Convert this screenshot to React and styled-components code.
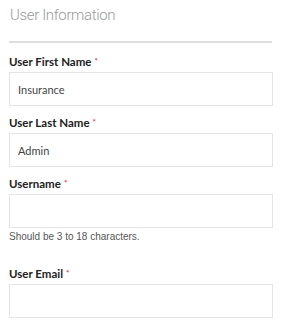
import React from 'react'
import styled, { createGlobalStyle } from 'styled-components'

const GlobalStyle = createGlobalStyle`
  body {
    margin: 0;
    background: #fff;
  }
`

const fields = [
  { label: 'User First Name', value: 'Insurance' },
  { label: 'User Last Name', value: 'Admin' },
  { label: 'Username', value: '', help: 'Should be 3 to 18 characters.' },
  { label: 'User Email', value: '' },
]

function App() {
  return (
    <>
      <GlobalStyle />
      <StyledPanel>
        <StyledHeading>User Information</StyledHeading>
        <StyledDivider />
        {fields.map((f) => (
          <StyledGroup key={f.label} hasHelp={!!f.help}>
            <StyledLabel>
              {f.label}
              <StyledRequired>*</StyledRequired>
            </StyledLabel>
            <StyledInput defaultValue={f.value} />
            {f.help && <StyledHelp>{f.help}</StyledHelp>}
          </StyledGroup>
        ))}
      </StyledPanel>
    </>
  )
}

const StyledPanel = styled.div`
  padding: 5px 8px 0 9px;
  width: 264px;
`
const StyledHeading = styled.h3`
  margin: 0;
  font-family: Roboto, sans-serif;
  font-weight: 300;
  font-size: 15px;
  letter-spacing: -0.35px;
  line-height: 20px;
  color: #9a9a9a;
  padding-left: 1px;
`
const StyledDivider = styled.div`
  height: 2px;
  width: 263px;
  background: #dedede;
  margin: 16px 0 11px;
`
const StyledGroup = styled.div`
  display: flex;
  flex-direction: column;
  margin-bottom: ${(p) => (p.hasHelp ? '23px' : '9px')};
`
const StyledLabel = styled.label`
  display: block;
  height: 16px;
  font-family: Lato, sans-serif;
  font-weight: 700;
  font-size: 11.5px;
  line-height: 16px;
  color: #222;
  margin-bottom: 2px;
`
const StyledRequired = styled.span`
  color: #e8343a;
  font-size: 8px;
  line-height: 1;
  margin-left: 3px;
  vertical-align: 2px;
`
const StyledInput = styled.input`
  box-sizing: border-box;
  height: 34px;
  width: 264px;
  margin: 0;
  border: 1px solid #e4e4e4;
  border-radius: 0;
  padding: 0 8px;
  font-family: Lato, sans-serif;
  font-size: 11px;
  color: #444;
  outline: none;
  background: #fff;
`
const StyledHelp = styled.div`
  font-family: 'Liberation Sans', Arial, sans-serif;
  font-size: 10px;
  line-height: 13px;
  color: #555;
  margin-top: 2px;
`

export default App
